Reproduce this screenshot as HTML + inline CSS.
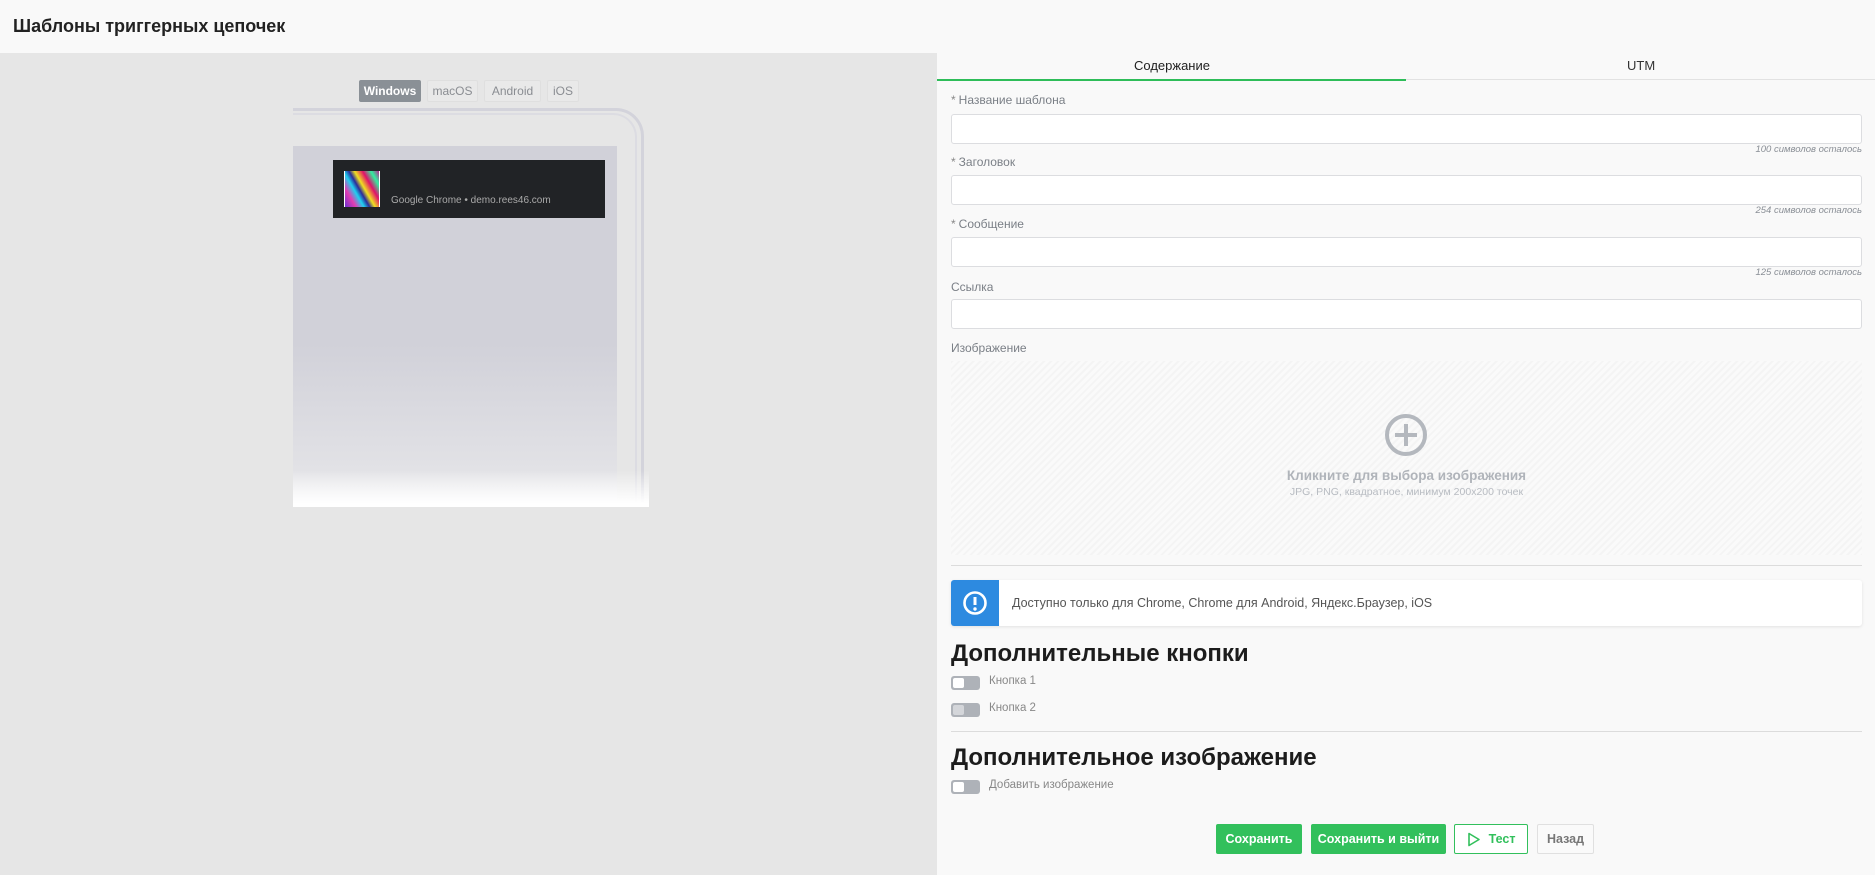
<!DOCTYPE html>
<html><head><meta charset="utf-8"><style>
*{box-sizing:border-box;margin:0;padding:0}
body{width:1875px;height:875px;overflow:hidden;font-family:"Liberation Sans","DejaVu Sans",sans-serif;background:#f9f9f9;position:relative;color:#222}
.a{position:absolute}
.lbl{position:absolute;left:951px;font-size:12px;color:#7a7f86}
.lbl b{color:#888;font-weight:normal;margin-right:3px}
.inp{position:absolute;left:951px;width:911px;height:30px;background:#fff;border:1px solid #dcdde0;border-radius:3px}
.hint{position:absolute;right:13px;font-size:9.5px;font-style:italic;color:#8a8f96}
.ostab{position:absolute;top:80px;height:22px;border:1px solid #dfdfdf;background:#e9e9e9;color:#8a8d92;font-size:12px;line-height:20px;text-align:center;border-radius:2px}
.tog{position:absolute;left:951px;width:29px;height:14px;background:#aeb2b8;border-radius:3px}
.tog:after{content:"";position:absolute;left:2px;top:2px;width:11px;height:10px;background:#fff;border-radius:2px}
.tog.d:after{background:#d4d6da}
.tl{position:absolute;left:989px;font-size:11.5px;color:#888}
.h2{position:absolute;left:951px;font-size:24px;font-weight:bold;color:#1c1c1c}
.btn{position:absolute;top:824px;height:30px;font-size:12.5px;font-weight:bold;line-height:30px;text-align:center;border-radius:2px}
</style></head><body>
<div class="a" style="left:0;top:0;width:1875px;height:53px;background:#f9f9f9"></div>
<div class="a" style="left:13px;top:16px;font-size:18px;font-weight:bold;color:#222">Шаблоны триггерных цепочек</div>
<div class="a" style="left:0;top:53px;width:937px;height:822px;background:#e6e6e6"></div>

<div class="ostab" style="left:359px;width:62px;background:#8a9096;border-color:#8a9096;color:#fff;font-weight:bold">Windows</div>
<div class="ostab" style="left:427px;width:51px">macOS</div>
<div class="ostab" style="left:484px;width:57px">Android</div>
<div class="ostab" style="left:547px;width:32px">iOS</div>

<div class="a" style="left:293px;top:105px;width:356px;height:402px;overflow:hidden">
  <div class="a" style="left:-40px;top:3px;width:391px;height:460px;border:3px solid #d3d3db;border-radius:28px;border-left:none;border-bottom:none"></div>
  <div class="a" style="left:-40px;top:8px;width:384px;height:460px;border:2px solid #dcdce2;border-radius:24px;border-left:none;border-bottom:none"></div>
  <div class="a" style="left:0;top:41px;width:324px;height:361px;background:linear-gradient(#d1d1d9 0%,#d1d1d9 55%,#e2e2e6 90%,#ececee 100%)"></div>
  <div class="a" style="left:0;top:365px;width:356px;height:37px;background:linear-gradient(rgba(255,255,255,0),#fff 90%)"></div>
</div>
<div class="a" style="left:333px;top:160px;width:272px;height:58px;background:#212326"></div>
<div class="a" style="left:344px;top:171px;width:36px;height:36px;border-left:1px solid #fff;border-right:1px solid #fff;background:linear-gradient(60deg,#6a2fd0 0%,#e23cb0 20%,#1fd0f0 35%,#2a2a9a 45%,#f0e020 55%,#e0106a 70%,#30f0a0 85%,#c02090 100%)"></div>
<div class="a" style="left:391px;top:195px;font-size:10px;color:#aaa">Google Chrome • demo.rees46.com</div>

<div class="a" style="left:937px;top:79px;width:938px;height:1px;background:#e2e2e2"></div>
<div class="a" style="left:937px;top:79px;width:469px;height:2px;background:#2ebd59"></div>
<div class="a" style="left:1134px;top:58px;font-size:13px;color:#222">Содержание</div>
<div class="a" style="left:1627px;top:58px;font-size:13px;color:#333">UTM</div>

<div class="lbl" style="top:93px"><b>*</b>Название шаблона</div>
<div class="inp" style="top:114px"></div>
<div class="hint" style="top:144px">100 символов осталось</div>
<div class="lbl" style="top:155px"><b>*</b>Заголовок</div>
<div class="inp" style="top:175px"></div>
<div class="hint" style="top:205px">254 символов осталось</div>
<div class="lbl" style="top:217px"><b>*</b>Сообщение</div>
<div class="inp" style="top:237px"></div>
<div class="hint" style="top:267px">125 символов осталось</div>
<div class="lbl" style="top:280px">Ссылка</div>
<div class="inp" style="top:299px"></div>
<div class="lbl" style="top:341px">Изображение</div>
<div class="a" style="left:951px;top:361px;width:911px;height:194px;background:repeating-linear-gradient(135deg,#f4f4f4 0 2px,#fafafa 2px 5px)"></div>
<svg class="a" style="left:1384px;top:413px" width="44" height="44" viewBox="0 0 44 44"><circle cx="22" cy="22" r="19" fill="none" stroke="#b4b8be" stroke-width="4"/><path d="M22 11v22M11 22h22" stroke="#b4b8be" stroke-width="4"/></svg>
<div class="a" style="left:951px;width:911px;top:468px;text-align:center;font-size:13.5px;font-weight:bold;color:#b0b4ba">Кликните для выбора изображения</div>
<div class="a" style="left:951px;width:911px;top:486px;text-align:center;font-size:10.5px;color:#b8bcc2">JPG, PNG, квадратное, минимум 200x200 точек</div>
<div class="a" style="left:951px;top:565px;width:911px;height:1px;background:#dcdcdc"></div>

<div class="a" style="left:951px;top:580px;width:911px;height:46px;background:#fff;border-radius:3px;box-shadow:0 1px 3px rgba(0,0,0,.1)"></div>
<div class="a" style="left:951px;top:580px;width:48px;height:46px;background:#2d8ae0;border-radius:3px 0 0 3px"></div>
<svg class="a" style="left:962px;top:590px" width="26" height="26" viewBox="0 0 26 26"><circle cx="13" cy="13" r="10.5" fill="none" stroke="#fff" stroke-width="2.6"/><path d="M13 7v8" stroke="#fff" stroke-width="3"/><circle cx="13" cy="19" r="1.7" fill="#fff"/></svg>
<div class="a" style="left:1012px;top:596px;font-size:12.5px;color:#555">Доступно только для Chrome, Chrome для Android, Яндекс.Браузер, iOS</div>

<div class="h2" style="top:640px">Дополнительные кнопки</div>
<div class="tog" style="top:676px"></div><div class="tl" style="top:675px">Кнопка 1</div>
<div class="tog d" style="top:703px"></div><div class="tl" style="top:702px">Кнопка 2</div>
<div class="a" style="left:951px;top:731px;width:911px;height:1px;background:#dcdcdc"></div>
<div class="h2" style="top:744px">Дополнительное изображение</div>
<div class="tog" style="top:780px"></div><div class="tl" style="top:779px">Добавить изображение</div>

<div class="btn" style="left:1216px;width:86px;background:#32c05c;color:#fff">Сохранить</div>
<div class="btn" style="left:1311px;width:135px;background:#32c05c;color:#fff">Сохранить и выйти</div>
<div class="btn" style="left:1454px;width:74px;border:1px solid #32c05c;color:#32c05c;background:#fff;line-height:28px"><svg style="position:absolute;left:12px;top:7px" width="14" height="15" viewBox="0 0 14 15"><path d="M2 1.5L12 7.5 2 13.5Z" fill="none" stroke="#32c05c" stroke-width="1.6" stroke-linejoin="round"/></svg><span style="margin-left:22px">Тест</span></div>
<div class="btn" style="left:1537px;width:57px;border:1px solid #e0e0e0;color:#777;background:#fafafa;line-height:28px">Назад</div>
</body></html>
